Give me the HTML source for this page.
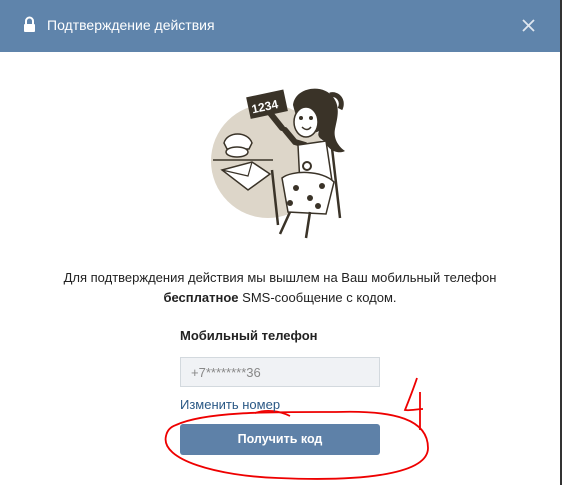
<!DOCTYPE html>
<html><head><meta charset="utf-8"><style>
*{margin:0;padding:0;box-sizing:border-box}
body{width:562px;height:485px;background:#fff;font-family:"Liberation Sans",sans-serif;position:relative;overflow:hidden}
.hdr{position:absolute;left:0;top:0;width:560px;height:52px;background:#5f84ab;color:#fff;font-size:14px}
.hdr .t{position:absolute;left:47px;top:17px}
.edge{position:absolute;right:0;top:0;width:2px;height:485px;background:#333}
.p{position:absolute;left:0;width:560px;text-align:center;font-size:13px;color:#222}
.lbl{position:absolute;left:180px;top:328px;font-size:13px;font-weight:600;color:#222}
.inp{position:absolute;left:180px;top:357px;width:200px;height:30px;background:#f0f2f5;border:1px solid #d3d9de;font-size:13px;color:#888;padding:7px 0 0 10px}
.lnk{position:absolute;left:180px;top:397px;font-size:13px;color:#2a5885}
.btn{position:absolute;left:180px;top:424px;width:200px;height:31px;background:#5e81a8;border-radius:3px;color:#fff;font-size:12.5px;font-weight:600;text-align:center;line-height:31px}
svg{position:absolute;left:0;top:0}
</style></head><body>
<div class="hdr">
<svg width="40" height="52"><rect x="24" y="24" width="11" height="8" rx="1" fill="#fff"/><path d="M26 24v-3a3.5 3.5 0 0 1 7 0v3" stroke="#fff" stroke-width="2" fill="none"/></svg>
<div class="t">Подтверждение действия</div>
<svg style="left:520px" width="20" height="52"><path d="M3 20l11 11M14 20L3 31" stroke="#dfe7f0" stroke-width="1.8"/></svg>
</div>
<div class="edge"></div>
<svg width="562" height="485">
<circle cx="268" cy="161" r="57" fill="#ddd6c9"/>
<rect x="248" y="93" width="38" height="22" fill="#3a3328" transform="rotate(-12 268 104)"/>
<text x="251" y="110" fill="#fff" font-size="12" font-weight="bold" font-family="Liberation Sans" transform="rotate(-12 268 104)">1234</text>
<path d="M282 128l-12-15" stroke="#3a3328" stroke-width="6" stroke-linecap="round"/>
<path d="M293 105c2-18 30-22 40-8c8 10 4 22 2 32c-2 10 4 18 10 22c-8 4-18-2-20-10c-6-2-8-6-6-10c-6 4-20 0-26-26z" fill="#3a3328"/>
<path d="M330 95c8-2 14 6 10 14" stroke="#3a3328" stroke-width="5" fill="none"/>
<ellipse cx="306" cy="122" rx="12" ry="15" fill="#fff" stroke="#3a3328" stroke-width="1.5"/>
<circle cx="301" cy="118" r="2" fill="#3a3328"/><circle cx="311" cy="118" r="2" fill="#3a3328"/>
<path d="M302 127q5 5 9 0" stroke="#3a3328" stroke-width="1.5" fill="#fff"/>
<path d="M285 130l10 12 10 3" stroke="#3a3328" stroke-width="6" fill="none" stroke-linecap="round"/>
<path d="M298 145l28-4 6 40-32 4z" fill="#fff" stroke="#3a3328" stroke-width="1.5"/>
<circle cx="307" cy="166" r="4" fill="none" stroke="#3a3328" stroke-width="2"/>
<path d="M282 178c10-8 40-8 52 4l-8 32-38-2z" fill="#fff" stroke="#3a3328" stroke-width="1.5"/>
<circle cx="296" cy="188" r="3" fill="#3a3328"/><circle cx="310" cy="198" r="3" fill="#3a3328"/><circle cx="322" cy="186" r="3" fill="#3a3328"/><circle cx="290" cy="203" r="3" fill="#3a3328"/><circle cx="318" cy="206" r="3" fill="#3a3328"/>
<path d="M332 148l8 70M272 170l6 55M290 212l-10 22M310 212l-4 26" stroke="#3a3328" stroke-width="2.5" fill="none"/>
<path d="M224 143c3-12 24-12 28 0l-3 6h-22z" fill="#fff" stroke="#3a3328" stroke-width="1.5"/>
<ellipse cx="237" cy="152" rx="11" ry="5" fill="#fff" stroke="#3a3328" stroke-width="1.5"/>
<path d="M222 170l30-8 18 12-22 16z" fill="#fff" stroke="#3a3328" stroke-width="1.5"/>
<path d="M222 170l26 6 4-14" stroke="#3a3328" stroke-width="1.2" fill="none"/>
<path d="M213 160h60" stroke="#3a3328" stroke-width="1.5"/>
<path d="M176 425c30-14 100-13 160-13c60-2 92 8 92 36c0 25-60 34-150 30c-60-2-118-18-112-42c1-5 4-9 10-11" stroke="#e00" stroke-width="1.8" fill="none"/>
<path d="M255 413c12-4 25-2 35 3" stroke="#e00" stroke-width="1.8" fill="none"/>
<path d="M417 378c-4 12-8 22-12 32c5 1 12-1 18-1M420 392v38" stroke="#e00" stroke-width="1.8" fill="none"/>
</svg>
<div class="p" style="top:270px">Для подтверждения действия мы вышлем на Ваш мобильный телефон</div>
<div class="p" style="top:290px"><b>бесплатное</b> SMS-сообщение с кодом.</div>
<div class="lbl">Мобильный телефон</div>
<div class="inp">+7********36</div>
<div class="lnk">Изменить номер</div>
<div class="btn">Получить код</div>
</body></html>
